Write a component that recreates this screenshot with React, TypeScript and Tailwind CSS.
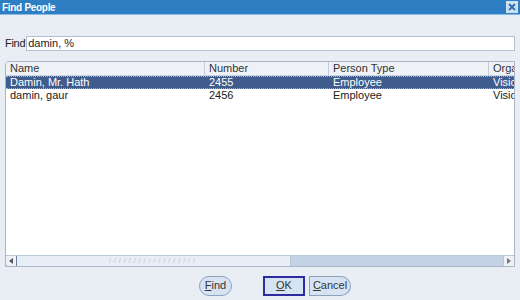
import React from 'react';

const rows = [
  { name: 'Damin, Mr. Hath', number: '2455', type: 'Employee', org: 'Visio', selected: true },
  { name: 'damin, gaur', number: '2456', type: 'Employee', org: 'Visio', selected: false },
];

function Cols({ a, b, c, d, className }: { a: string; b: string; c: string; d: string; className: string }) {
  return (
    <div className={`flex h-[13px] items-center leading-[13px] ${className}`}>
      <div className="w-[199px] shrink-0 pl-[4px]">{a}</div>
      <div className="w-[124px] shrink-0 pl-[4px]">{b}</div>
      <div className="w-[160px] shrink-0 pl-[4px]">{c}</div>
      <div className="flex-1 overflow-hidden pl-[4px]">{d}</div>
    </div>
  );
}

export default function App() {
  return (
    <div
      className="flex h-[300px] w-[520px] flex-col overflow-hidden bg-[#e9eef5] text-[11px] text-[#222]"
      style={{ fontFamily: '"Liberation Sans", Arial, sans-serif' }}
    >
      <div className="flex h-[15px] shrink-0 items-center justify-between border-b border-[#8bbbe3] bg-[#2d7ec3] pl-[2px] pr-[2px]">
        <span className="text-[10px] font-bold tracking-[-0.3px] text-white">Find People</span>
        <div className="flex h-[12px] w-[12px] items-center justify-center bg-[#cfe0f1]">
          <svg width="8" height="8" viewBox="0 0 8 8">
            <path d="M1 1L7 7M7 1L1 7" stroke="#2d6fb0" strokeWidth="1.8" />
          </svg>
        </div>
      </div>

      <div className="mt-[20px] flex items-center gap-[1px] pl-[5px] pr-[5px]">
        <span className="shrink-0 tracking-[-0.3px]">Find</span>
        <div className="flex h-[15px] flex-1 items-center border border-[#b3c0d0] bg-white pl-[1px]">damin, %</div>
      </div>

      <div className="ml-[5px] mr-[5px] mt-[9px] flex h-[206px] flex-col overflow-hidden rounded-tl-[4px] border border-[#a9b6c7] bg-white">
        <div className="flex h-[14px] shrink-0 items-center border-b border-[#c9d3df] bg-[#eef2f7] text-[#333]">
          <div className="w-[199px] shrink-0 border-r border-[#c3ccd8] pl-[4px]">Name</div>
          <div className="w-[124px] shrink-0 border-r border-[#c3ccd8] pl-[4px]">Number</div>
          <div className="w-[160px] shrink-0 border-r border-[#c3ccd8] pl-[4px]">Person Type</div>
          <div className="flex-1 overflow-hidden whitespace-nowrap pl-[4px]">Orga</div>
        </div>
        {rows.map((r) => (
          <Cols
            key={r.number}
            a={r.name}
            b={r.number}
            c={r.type}
            d={r.org}
            className={r.selected ? 'border-y border-dotted border-[#9fb3cf] bg-[#3f5c8c] text-white' : 'text-[#222]'}
          />
        ))}
        <div className="flex-1" />
        <div className="flex h-[11px] shrink-0 items-stretch border-t border-[#b9c6d6] bg-[#c3d2e5]">
          <div className="flex w-[11px] items-center justify-center rounded-bl-[4px] border-r border-[#6f7f95] bg-[#eef2f7]">
            <svg width="4" height="6" viewBox="0 0 4 6">
              <path d="M4 0L0 3L4 6Z" fill="#555" />
            </svg>
          </div>
          <div className="flex w-[274px] items-center justify-center border-r border-[#b9c6d6] bg-[#e8eef5]">
            <span className="text-[7px] leading-none tracking-[3px] text-[#b4bfcc]">//////////////////</span>
          </div>
          <div className="flex-1" />
          <div className="flex w-[11px] items-center justify-center border-l border-[#b9c6d6] bg-[#eef2f7]">
            <svg width="4" height="6" viewBox="0 0 4 6">
              <path d="M0 0L4 3L0 6Z" fill="#777" />
            </svg>
          </div>
        </div>
      </div>

      <div className="mt-[9px] flex items-center pl-[199px]">
        <button className="flex h-[20px] w-[33px] items-center justify-center rounded-full border border-[#8fa2bb] bg-[#d6e3f2] text-[#333]">
          <span><span className="underline">F</span>ind</span>
        </button>
        <button className="ml-[31px] flex h-[20px] w-[42px] items-center justify-center border-2 border-[#2d2ba0] bg-[#d6e3f2] text-[#333]">
          <span><span className="underline">O</span>K</span>
        </button>
        <button className="ml-[4px] flex h-[20px] w-[42px] items-center justify-center rounded-r-full rounded-l-[6px] border border-[#8fa2bb] bg-[#d6e3f2] text-[#333]">
          <span><span className="underline">C</span>ancel</span>
        </button>
      </div>
    </div>
  );
}
